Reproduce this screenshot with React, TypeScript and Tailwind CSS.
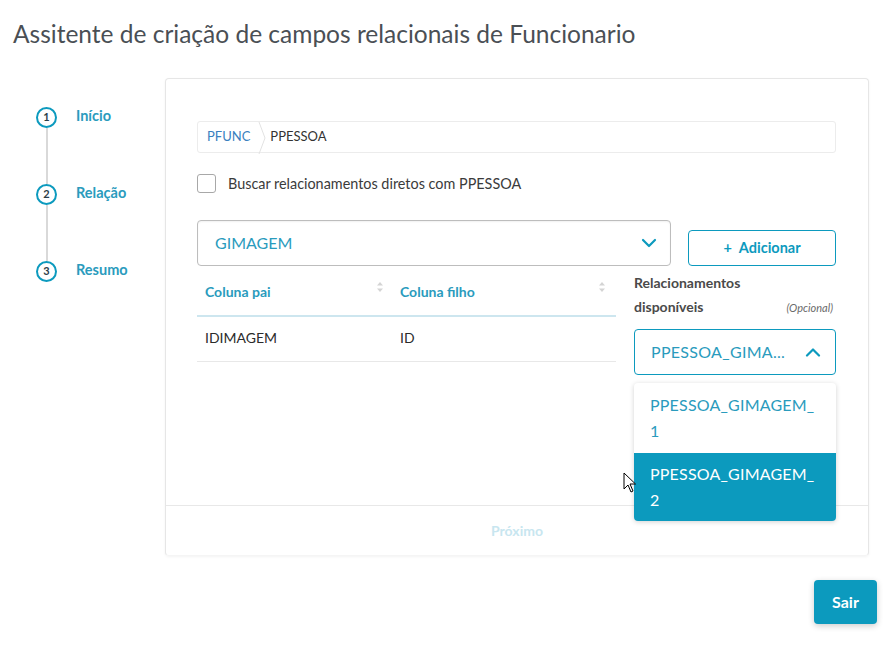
import React from "react";

const steps = [
  { n: 1, label: "Início" },
  { n: 2, label: "Relação" },
  { n: 3, label: "Resumo" },
];

function SortIcon() {
  return (
    <svg width="8" height="12" viewBox="0 0 8 12" className="shrink-0">
      <path d="M4 1 L7 4.5 H1 Z" fill="#d4d4d4" />
      <path d="M4 11 L7 7.5 H1 Z" fill="#d4d4d4" />
    </svg>
  );
}

function Chevron({ up = false }: { up?: boolean }) {
  return (
    <svg width="16" height="10" viewBox="0 0 16 10" fill="none">
      <path
        d={up ? "M2 8.5 L8 2.5 L14 8.5" : "M2 2 L8 8 L14 2"}
        stroke="#0c9abe"
        strokeWidth="2.2"
        strokeLinecap="round"
        strokeLinejoin="round"
      />
    </svg>
  );
}

export default function App() {
  return (
    <div className="relative w-[891px] h-[646px] bg-white overflow-hidden font-['Lato','Noto_Sans',sans-serif]">
      {/* titulo */}
      <div className="pl-[13px] pt-[19px] text-[24.5px] leading-[30px] text-[#4a4f55]">
        Assitente de criação de campos relacionais de Funcionario
      </div>

      <div className="flex mt-[29px]">
        {/* stepper */}
        <div className="w-[165px] shrink-0 pl-[36px] pt-[29px]">
          {steps.map((s, i) => (
            <div key={s.n} className="flex">
              <div className="flex flex-col items-center w-[21px]">
                <div className="w-[21px] h-[21px] rounded-full border-2 border-[#0c9abe] flex items-center justify-center text-[11px] font-bold text-[#2c3e48]">
                  {s.n}
                </div>
                {i < steps.length - 1 && <div className="w-[2px] h-[56px] bg-[#d9d9d9]" />}
              </div>
              <div className="ml-[19px] text-[14.5px] leading-[18px] font-bold text-[#2a9bbd]">
                {s.label}
              </div>
            </div>
          ))}
        </div>

        {/* card */}
        <div className="w-[704px] h-[478px] border border-[#e6e6e6] border-b-[#f5f5f5] rounded-[4px] shadow-[0_1px_3px_rgba(0,0,0,0.05)] flex flex-col">
          <div className="h-[426px] pl-[31px] pr-[32px] pt-[42px]">
            {/* breadcrumb */}
            <div className="h-[32px] border border-[#ececec] rounded-[3px] flex items-center text-[13px]">
              <div className="pl-[9px] pr-[10px] text-[#3a7fc0] h-full flex items-center relative">
                PFUNC
                <svg className="absolute right-[-6px] top-0" width="8" height="32" viewBox="0 0 8 32">
                  <path d="M1 0 L7 16 L1 32" stroke="#e2e2e2" fill="none" />
                </svg>
              </div>
              <div className="pl-[10px] text-[#333]">PPESSOA</div>
            </div>

            {/* checkbox */}
            <div className="flex items-center mt-[20px] gap-[12px]">
              <div className="w-[19px] h-[19px] border border-[#a8a8a8] rounded-[3px] bg-white" />
              <span className="text-[14.4px] text-[#3b3b3b]">Buscar relacionamentos diretos com PPESSOA</span>
            </div>

            {/* select + adicionar */}
            <div className="flex items-start mt-[25px] gap-[17px]">
              <div className="flex-1 h-[46px] border border-[#bdbdbd] rounded-[4px] shadow-[inset_0_1px_2px_rgba(0,0,0,0.06)] flex items-center justify-between pl-[17px] pr-[13px]">
                <span className="text-[16px] text-[#2a9bbd]">GIMAGEM</span>
                <Chevron />
              </div>
              <div className="w-[148px] h-[36px] mt-[10px] border border-[#0c9abe] rounded-[4px] flex items-center justify-center text-[14.5px] font-bold text-[#0c9abe]">
                <span className="mr-[7px]">+</span>Adicionar
              </div>
            </div>

            {/* tabela + relacionamentos */}
            <div className="flex gap-[18px]">
              <div className="w-[419px]">
                <div className="flex h-[51px] border-b-2 border-[#cde6ef]">
                  <div className="w-[195px] flex items-center justify-between pl-[8px] pr-[8px] text-[14px] font-bold text-[#2a9bbd]">
                    <span className="mt-[2px]">Coluna pai</span>
                    <span className="-mt-[6px]"><SortIcon /></span>
                  </div>
                  <div className="flex-1 flex items-center justify-between pl-[8px] pr-[10px] text-[14px] font-bold text-[#2a9bbd]">
                    <span className="mt-[2px]">Coluna filho</span>
                    <span className="-mt-[6px]"><SortIcon /></span>
                  </div>
                </div>
                <div className="flex h-[45px] pb-[2px] items-center border-b border-[#e8e8e8] text-[14px] text-[#2b2b2b]">
                  <div className="w-[195px] pl-[8px]">IDIMAGEM</div>
                  <div className="pl-[8px]">ID</div>
                </div>
              </div>

              <div className="w-[202px] relative pt-[5px]">
                <div className="text-[14px] leading-[24px] font-bold text-[#4a4a4a]">Relacionamentos</div>
                <div className="flex items-baseline justify-between">
                  <span className="text-[14px] leading-[24px] font-bold text-[#4a4a4a]">disponíveis</span>
                  <span className="text-[11px] italic text-[#6b6b6b] pr-[3px]">(Opcional)</span>
                </div>
                <div className="mt-[10px] h-[46px] border border-[#0c9abe] rounded-[4px] flex items-center justify-between pl-[16px] pr-[14px]">
                  <span className="text-[16px] text-[#2a9bbd] tracking-[0.3px]">PPESSOA_GIMA...</span>
                  <Chevron up />
                </div>
                {/* dropdown aberto */}
                <div className="absolute left-0 top-[117px] w-[202px] rounded-[4px] bg-white shadow-[0_1px_5px_rgba(0,0,0,0.18)] overflow-hidden z-10">
                  <div className="h-[70px] pl-[16px] pr-[16px] pt-[9px] text-[16px] leading-[26px] tracking-[0.2px] text-[#2a9bbd] break-all">
                    PPESSOA_GIMAGEM_ 1
                  </div>
                  <div className="h-[68px] pl-[16px] pr-[16px] pt-[8px] text-[16px] leading-[26px] tracking-[0.2px] text-white bg-[#0c9abe] break-all">
                    PPESSOA_GIMAGEM_ 2
                  </div>
                </div>
              </div>
            </div>
          </div>

          {/* rodape */}
          <div className="flex-1 border-t border-[#e8e8e8] flex items-center justify-center">
            <span className="text-[14px] font-bold text-[#c8e6f0]">Próximo</span>
          </div>
        </div>
      </div>

      <div className="flex justify-end pr-[14px] mt-[24px]">
        <div className="w-[63px] h-[44px] bg-[#0c9abe] rounded-[4px] shadow-[0_2px_6px_rgba(0,0,0,0.2)] flex items-center justify-center text-white font-bold text-[16px]">
          Sair
        </div>
      </div>

      {/* cursor */}
      <svg className="absolute left-[623px] top-[472px] z-20" width="14" height="22" viewBox="0 0 14 22">
        <path d="M1 1 L1 17 L5 13 L8 20 L10 19 L7 12 L12.5 12 Z" fill="white" stroke="black" strokeWidth="1" strokeLinejoin="round" />
      </svg>
    </div>
  );
}
